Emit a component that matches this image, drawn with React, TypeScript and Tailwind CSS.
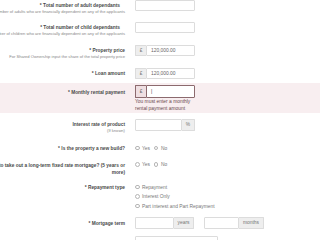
import React from 'react';

// ─── Small building blocks ────────────────────────────────────
const FONT = "font-['Liberation_Sans',Arial,sans-serif]";

function Label({ lines, help, pr = '' }: { lines: string[]; help?: string[]; pr?: string }) {
  return (
    <div className="w-[125px] shrink-0 flex flex-col items-end pt-[1.5px]">
      {lines.map((l) => (
        <div key={l} className={`whitespace-nowrap text-[4.8px] leading-[7px] font-bold text-[#4a4a4a] ${pr}`}>
          {l}
        </div>
      ))}
      {help?.map((h) => (
        <div key={h} className="whitespace-nowrap text-[4.1px] leading-[6px] text-[#888]">
          {h}
        </div>
      ))}
    </div>
  );
}

function TextBox({ w = 'w-[60px]', h = 'h-[11px]', value = '' }: { w?: string; h?: string; value?: string }) {
  return (
    <div className={`${w} ${h} border border-[#dcdcdc] rounded-[1px] bg-white flex items-center px-[4px] text-[4.9px] text-[#666]`}>
      {value}
    </div>
  );
}

function Addon({ text, side, w, h = 'h-[11px]' }: { text: string; side: 'left' | 'right'; w: string; h?: string }) {
  return (
    <div
      className={`${w} ${h} bg-[#eeeeee] border border-[#dcdcdc] flex items-center justify-center text-[4.9px] text-[#777] ${
        side === 'left' ? 'border-r-0 rounded-l-[1px]' : 'border-l-0 rounded-r-[1px]'
      }`}
    >
      {text}
    </div>
  );
}

function Radio({ label }: { label: string }) {
  return (
    <div className="flex items-center gap-[2.5px] text-[4.9px] text-[#777] leading-[7px]">
      <span className="w-[4.5px] h-[4.5px] rounded-full border-[0.6px] border-[#b5b5b5] bg-white" />
      <span>{label}</span>
    </div>
  );
}

// ─── Page ─────────────────────────────────────────────────────
export default function App() {
  return (
    <div className={`w-[320px] h-[240px] overflow-hidden bg-white ${FONT}`}>
      {/* adults */}
      <div className="flex gap-[10px] h-[22px]">
        <Label
          lines={['* Total number of adult dependants']}
          pr="pr-[5px]"
          help={['Number of adults who are financially dependent on any of the applicants']}
        />
        <TextBox />
      </div>

      {/* children */}
      <div className="flex gap-[10px] h-[23px]">
        <Label
          lines={['* Total number of child dependants']}
          pr="pr-[5px]"
          help={['Number of children who are financially dependent on any of the applicants']}
        />
        <TextBox />
      </div>

      {/* property price */}
      <div className="flex gap-[10px] h-[23px]">
        <Label
          lines={['* Property price']}
          help={['For Shared Ownership input the share of the total property price']}
        />
        <div className="flex">
          <Addon text="£" side="left" w="w-[11px]" />
          <TextBox w="w-[49px]" value="120,000.00" />
        </div>
      </div>

      {/* loan amount */}
      <div className="flex gap-[10px] h-[15px]">
        <Label lines={['* Loan amount']} />
        <div className="flex">
          <Addon text="£" side="left" w="w-[11px]" />
          <TextBox w="w-[49px]" value="120,000.00" />
        </div>
      </div>

      {/* monthly rental payment - error */}
      <div className="flex gap-[10px] bg-[#f8eef0] pt-[2px] pb-[1px] h-[30px]">
        <div className="w-[125px] shrink-0 flex flex-col items-end pt-[3.5px]">
          <div className="whitespace-nowrap text-[4.8px] leading-[7px] font-bold text-[#4a4a4a]">
            * Monthly rental payment
          </div>
        </div>
        <div className="flex flex-col">
          <div className="flex">
            <div className="w-[11px] h-[13px] bg-[#efdfe2] border border-[#8c6a6e] border-r-0 rounded-l-[1px] flex items-center justify-center text-[4.9px] text-[#666]">
              £
            </div>
            <div className="w-[49px] h-[13px] border border-[#8c6a6e] rounded-r-[1px] bg-white flex items-center px-[4px] text-[4.9px] text-[#333]">
              |
            </div>
          </div>
          <div className="text-[4.9px] leading-[7px] text-[#6b4a4e] whitespace-nowrap">You must enter a monthly</div>
          <div className="text-[4.9px] leading-[7px] text-[#6b4a4e] whitespace-nowrap">rental payment amount</div>
        </div>
      </div>

      {/* interest rate */}
      <div className="flex gap-[10px] h-[24px] mt-[6px]">
        <Label lines={['Interest rate of product']} help={['(If known)']} />
        <div className="flex">
          <TextBox w="w-[47px]" h="h-[12px]" />
          <Addon text="%" side="right" w="w-[13px]" h="h-[12px]" />
        </div>
      </div>

      {/* new build */}
      <div className="flex gap-[10px] h-[17px]">
        <Label lines={['* Is the property a new build?']} />
        <div className="flex gap-[4px] pt-[1.5px] h-fit">
          <Radio label="Yes" />
          <Radio label="No" />
        </div>
      </div>

      {/* fixed rate */}
      <div className="flex gap-[10px] h-[22px]">
        <Label lines={['* Would you like to take out a long-term fixed rate mortgage? (5 years or', 'more)']} />
        <div className="flex gap-[4px] pt-[1px] h-fit">
          <Radio label="Yes" />
          <Radio label="No" />
        </div>
      </div>

      {/* repayment type */}
      <div className="flex gap-[10px] h-[35px]">
        <Label lines={['* Repayment type']} />
        <div className="flex flex-col pt-[1.5px]">
          <div className="h-[9.5px]"><Radio label="Repayment" /></div>
          <div className="h-[9.5px]"><Radio label="Interest Only" /></div>
          <div className="h-[9.5px]"><Radio label="Part interest and Part Repayment" /></div>
        </div>
      </div>

      {/* mortgage term */}
      <div className="flex gap-[10px] h-[19px]">
        <div className="w-[125px] shrink-0 flex flex-col items-end pt-[2.5px]">
          <div className="whitespace-nowrap text-[4.8px] leading-[7px] font-bold text-[#4a4a4a]">* Mortgage term</div>
        </div>
        <div className="flex gap-[10px]">
          <div className="flex">
            <TextBox w="w-[39px]" h="h-[12px]" />
            <Addon text="years" side="right" w="w-[20px]" h="h-[12px]" />
          </div>
          <div className="flex">
            <TextBox w="w-[35px]" h="h-[12px]" />
            <Addon text="months" side="right" w="w-[25px]" h="h-[12px]" />
          </div>
        </div>
      </div>

      {/* next field */}
      <div className="flex gap-[10px]">
        <div className="w-[125px] shrink-0" />
        <TextBox w="w-[83px]" h="h-[12px]" />
      </div>
    </div>
  );
}
